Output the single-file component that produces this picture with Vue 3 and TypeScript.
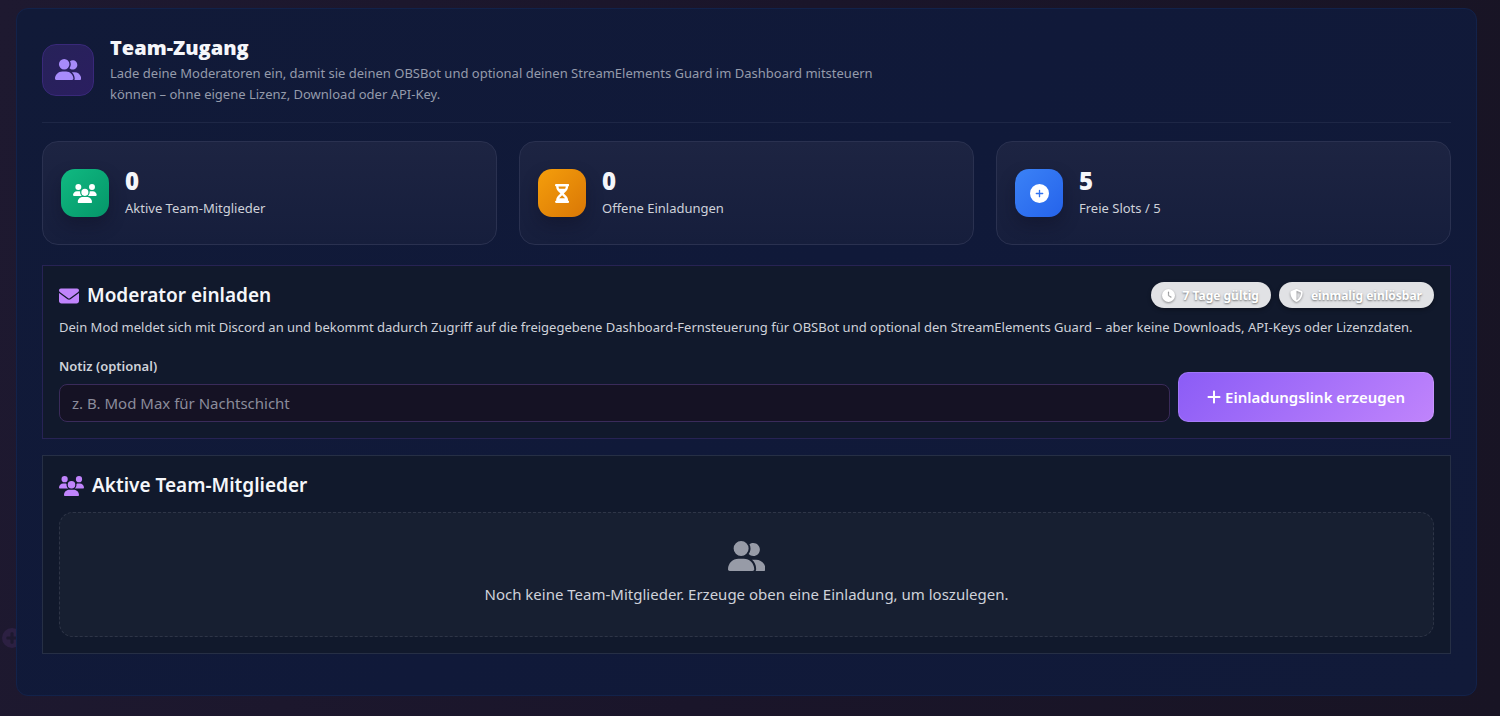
<script setup lang="ts">
interface Glyph {
  box: string
  path: string
}

interface Stat {
  value: number
  label: string
  tone: string
  glyph: Glyph
}

const userGroup: Glyph = {
  box: '0 0 640 512',
  path: 'M96 128a128 128 0 1 1 256 0A128 128 0 1 1 96 128zM0 482.3C0 383.8 79.8 304 178.3 304h91.4C368.2 304 448 383.8 448 482.3c0 16.4-13.3 29.7-29.7 29.7H29.7C13.3 512 0 498.7 0 482.3zM609.3 512H471.4c5.4-9.4 8.6-20.3 8.6-32v-8c0-60.7-27.1-115.2-69.8-151.8c2.4-.1 4.7-.2 7.1-.2h61.4C567.8 320 640 392.2 640 481.3c0 17-13.8 30.7-30.7 30.7zM432 256c-31 0-59-12.6-79.3-32.9C372.4 196.5 384 163.6 384 128c0-26.8-6.6-52.1-18.3-74.3C384.3 40.1 407.2 32 432 32c61.9 0 112 50.1 112 112s-50.1 112-112 112z',
}

const users: Glyph = {
  box: '0 0 640 512',
  path: 'M144 0a80 80 0 1 1 0 160A80 80 0 1 1 144 0zM512 0a80 80 0 1 1 0 160A80 80 0 1 1 512 0zM0 298.7C0 239.8 47.8 192 106.7 192h42.7c15.9 0 31 3.5 44.6 9.7c-1.3 7.2-1.9 14.7-1.9 22.3c0 38.2 16.8 72.5 43.3 96c-.2 0-.4 0-.7 0H21.3C9.6 320 0 310.4 0 298.7zM405.3 320c-.2 0-.4 0-.7 0c26.6-23.5 43.3-57.8 43.3-96c0-7.6-.7-15-1.9-22.3c13.6-6.3 28.7-9.7 44.6-9.7h42.7C592.2 192 640 239.8 640 298.7c0 11.8-9.6 21.3-21.3 21.3H405.3zM224 224a96 96 0 1 1 192 0 96 96 0 1 1 -192 0zM128 485.3C128 411.7 187.7 352 261.3 352H378.7C452.3 352 512 411.7 512 485.3c0 14.7-11.9 26.7-26.7 26.7H154.7c-14.7 0-26.7-11.9-26.7-26.7z',
}

const hourglass: Glyph = {
  box: '0 0 384 512',
  path: 'M32 0C14.3 0 0 14.3 0 32S14.3 64 32 64V75c0 42.4 16.9 83.1 46.9 113.1L146.7 256 78.9 323.9C48.9 353.9 32 394.6 32 437v11c-17.7 0-32 14.3-32 32s14.3 32 32 32H64 320h32c17.7 0 32-14.3 32-32s-14.3-32-32-32V437c0-42.4-16.9-83.1-46.9-113.1L237.3 256l67.9-67.9c30-30 46.9-70.7 46.9-113.1V64c17.7 0 32-14.3 32-32s-14.3-32-32-32H320 64 32zM96 75V64H288V75c0 19-5.6 37.4-16 53H112c-10.3-15.6-16-34-16-53zm16 309c3.5-5.3 7.6-10.3 12.1-14.9L192 301.3l67.9 67.9c4.6 4.6 8.6 9.6 12.1 14.9H112z',
}

const circlePlus: Glyph = {
  box: '0 0 512 512',
  path: 'M256 512A256 256 0 1 0 256 0a256 256 0 1 0 0 512zM238 342V274H170c-10 0-18-8-18-18s8-18 18-18h68V170c0-10 8-18 18-18s18 8 18 18v68h68c10 0 18 8 18 18s-8 18-18 18H274v68c0 10-8 18-18 18s-18-8-18-18z',
}

const floaterPlus: Glyph = {
  box: '0 0 512 512',
  path: 'M256 512A256 256 0 1 0 256 0a256 256 0 1 0 0 512zM216 370V296H142c-20 0-32-18-32-40s12-40 32-40h74V142c0-20 18-32 40-32s40 12 40 32v74h74c20 0 32 18 32 40s-12 40-32 40H296v74c0 20-18 32-40 32s-40-12-40-32z',
}

const envelope: Glyph = {
  box: '0 0 512 512',
  path: 'M48 64C21.5 64 0 85.5 0 112c0 15.1 7.1 29.3 19.2 38.4L236.8 313.6c11.4 8.5 27 8.5 38.4 0L492.8 150.4c12.1-9.1 19.2-23.3 19.2-38.4c0-26.5-21.5-48-48-48H48zM0 176V384c0 35.3 28.7 64 64 64H448c35.3 0 64-28.7 64-64V176L294.4 339.2c-22.8 17.1-54 17.1-76.8 0L0 176z',
}

const clock: Glyph = {
  box: '0 0 512 512',
  path: 'M256 0a256 256 0 1 1 0 512A256 256 0 1 1 256 0zM232 120V256c0 8 4 15.5 10.7 20l96 64c11 7.4 25.9 4.4 33.3-6.7s4.4-25.9-6.7-33.3L280 243.2V120c0-13.3-10.7-24-24-24s-24 10.7-24 24z',
}

const shield: Glyph = {
  box: '0 0 512 512',
  path: 'M256 0c4.6 0 9.2 1 13.4 2.9L457.7 82.8c22 9.3 38.4 31 38.3 57.2c-.5 99.2-41.3 280.7-213.6 363.2c-16.7 8-36.1 8-52.8 0C57.3 420.7 16.5 239.2 16 140c-.1-26.2 16.3-47.9 38.3-57.2L242.7 2.9C246.8 1 251.4 0 256 0zm0 66.8V444.8C394 378 431.1 230.1 432 141.4L256 66.8l0 0z',
}

const plus: Glyph = {
  box: '0 0 448 512',
  path: 'M256 80c0-17.7-14.3-32-32-32s-32 14.3-32 32V224H48c-17.7 0-32 14.3-32 32s14.3 32 32 32H192V432c0 17.7 14.3 32 32 32s32-14.3 32-32V288H400c17.7 0 32-14.3 32-32s-14.3-32-32-32H256V80z',
}

const stats: Stat[] = [
  { value: 0, label: 'Aktive Team-Mitglieder', tone: 'green', glyph: users },
  { value: 0, label: 'Offene Einladungen', tone: 'amber', glyph: hourglass },
  { value: 5, label: 'Freie Slots / 5', tone: 'blue', glyph: circlePlus },
]

const badges = [
  { label: '7 Tage gültig', glyph: clock },
  { label: 'einmalig einlösbar', glyph: shield },
]
</script>

<template>
  <div class="page">
    <svg class="floater" :viewBox="floaterPlus.box" aria-hidden="true"><path :d="floaterPlus.path" /></svg>

    <main class="shell">
      <header class="head">
        <span class="head-icon">
          <svg class="glyph" :viewBox="userGroup.box" aria-hidden="true"><path :d="userGroup.path" /></svg>
        </span>
        <div class="head-text">
          <h1>Team-Zugang</h1>
          <p>
            Lade deine Moderatoren ein, damit sie deinen OBSBot und optional deinen StreamElements Guard im Dashboard
            mitsteuern können – ohne eigene Lizenz, Download oder API-Key.
          </p>
        </div>
      </header>

      <section class="stats">
        <article v-for="stat in stats" :key="stat.label" class="stat">
          <span class="stat-icon" :class="stat.tone">
            <svg class="glyph" :viewBox="stat.glyph.box" aria-hidden="true"><path :d="stat.glyph.path" /></svg>
          </span>
          <div>
            <strong class="stat-value">{{ stat.value }}</strong>
            <span class="stat-label">{{ stat.label }}</span>
          </div>
        </article>
      </section>

      <section class="panel invite">
        <div class="panel-head">
          <h2>
            <svg class="glyph" :viewBox="envelope.box" aria-hidden="true"><path :d="envelope.path" /></svg>
            Moderator einladen
          </h2>
          <div class="badges">
            <span v-for="badge in badges" :key="badge.label" class="badge">
              <svg class="glyph" :viewBox="badge.glyph.box" aria-hidden="true"><path :d="badge.glyph.path" /></svg>
              {{ badge.label }}
            </span>
          </div>
        </div>
        <p class="info">
          Dein Mod meldet sich mit Discord an und bekommt dadurch Zugriff auf die freigegebene Dashboard-Fernsteuerung
          für OBSBot und optional den StreamElements Guard – aber keine Downloads, API-Keys oder Lizenzdaten.
        </p>
        <form class="invite-form" @submit.prevent>
          <div class="field">
            <label for="note">Notiz (optional)</label>
            <input id="note" type="text" placeholder="z. B. Mod Max für Nachtschicht" />
          </div>
          <button type="submit">
            <svg class="glyph" :viewBox="plus.box" aria-hidden="true"><path :d="plus.path" /></svg>
            Einladungslink erzeugen
          </button>
        </form>
      </section>

      <section class="panel members">
        <h2>
          <svg class="glyph" :viewBox="users.box" aria-hidden="true"><path :d="users.path" /></svg>
          Aktive Team-Mitglieder
        </h2>
        <div class="empty">
          <svg class="glyph" :viewBox="userGroup.box" aria-hidden="true"><path :d="userGroup.path" /></svg>
          <p>Noch keine Team-Mitglieder. Erzeuge oben eine Einladung, um loszulegen.</p>
        </div>
      </section>
    </main>
  </div>
</template>

<style>
body {
  margin: 0;
  background: #191427;
}
</style>

<style scoped>
* {
  box-sizing: border-box;
}

.page {
  position: relative;
  min-height: 100vh;
  padding: 8px 23px 20px 16px;
  background: linear-gradient(100deg, #1e1930 0%, #1a152a 50%, #181424 100%);
  color: #f5f6fa;
  font-family: 'Segoe UI', 'Noto Sans', 'Open Sans', sans-serif;
  font-size: 13px;
}

h1,
h2,
p {
  margin: 0;
}

.glyph {
  display: block;
  flex: none;
  height: 20px;
  fill: currentColor;
}

.floater {
  position: absolute;
  left: 2px;
  top: 628px;
  width: 20px;
  height: 20px;
  fill: #2c2042;
}

.shell {
  position: relative;
  padding: 25px 25px 41px;
  border: 1px solid #12224a;
  border-radius: 12px;
  background: linear-gradient(135deg, #111a38 0%, #101939 50%, #111a39 100%);
}

.head {
  display: flex;
  align-items: center;
  gap: 16px;
  padding-bottom: 17px;
  border-bottom: 1px solid #1e2746;
}

.head-icon {
  display: grid;
  flex: none;
  place-items: center;
  width: 52px;
  height: 52px;
  border: 1px solid #39297a;
  border-radius: 14px;
  background: linear-gradient(135deg, #272259, #2a1e60);
  color: #a78bfa;
}

.head-icon .glyph {
  height: 21px;
}

.head-text {
  max-width: 800px;
}

h1 {
  margin-bottom: 2px;
  font-family: 'Segoe UI', 'Open Sans', sans-serif;
  font-size: 20px;
  font-weight: 800;
  line-height: 27px;
}

.head-text p {
  color: #959bab;
  line-height: 21px;
}

.stats {
  display: grid;
  grid-template-columns: repeat(3, 1fr);
  gap: 22px;
  margin: 18px 0 20px;
}

.stat {
  display: flex;
  align-items: center;
  gap: 16px;
  min-height: 104px;
  padding: 17px 18px;
  border: 1px solid #2a3150;
  border-radius: 16px;
  background: linear-gradient(180deg, #1d2442, #161e3c);
}

.stat-icon {
  display: grid;
  flex: none;
  place-items: center;
  width: 48px;
  height: 48px;
  border-radius: 14px;
  box-shadow: 0 8px 16px rgba(15, 15, 35, 0.4);
  color: #fff;
}

.stat-icon .glyph {
  height: 19px;
}

.green {
  background: linear-gradient(135deg, #10b981, #059669);
}

.amber {
  background: linear-gradient(135deg, #f59e0b, #d97706);
}

.blue {
  background: linear-gradient(135deg, #3b82f6, #2563eb);
}

.stat-value,
.stat-label {
  display: block;
}

.stat-value {
  font-family: 'Segoe UI', 'Open Sans', sans-serif;
  font-size: 24px;
  font-weight: 800;
  line-height: 26px;
}

.stat-label {
  margin-top: 4px;
  color: #cfd2da;
  line-height: 20px;
}

.panel {
  padding: 16px;
  border: 1px solid #262f45;
  background: #11192c;
}

.invite {
  margin-bottom: 16px;
  border-color: #272354;
}

.panel-head {
  display: flex;
  justify-content: space-between;
  align-items: flex-start;
}

h2 {
  display: flex;
  align-items: center;
  gap: 8px;
  font-size: 19px;
  font-weight: 600;
  line-height: 27px;
}

h2 .glyph {
  color: #c084fc;
}

.badges {
  display: flex;
  gap: 8px;
}

.badge {
  display: flex;
  align-items: center;
  gap: 8px;
  height: 26px;
  padding: 0 12px 0 11px;
  border-radius: 13px;
  background: #e1e2e5;
  box-shadow: 0 2px 4px rgba(0, 0, 0, 0.3);
  color: #fff;
  font-size: 12px;
  font-weight: 700;
  text-shadow: 0 1px 2px rgba(0, 0, 0, 0.5);
}

.badge .glyph {
  height: 13px;
  overflow: visible;
  filter: drop-shadow(0 1px 1px rgba(0, 0, 0, 0.4));
}

.info {
  margin-top: 7px;
  color: #cfd2da;
  line-height: 22px;
}

.invite-form {
  display: flex;
  align-items: flex-end;
  gap: 8px;
  margin-top: 18px;
}

.field {
  display: flex;
  flex: 1;
  flex-direction: column;
  gap: 8px;
}

label {
  color: #cfd2da;
  font-weight: 600;
  line-height: 20px;
}

input {
  width: 100%;
  height: 38px;
  padding: 0 12px;
  border: 1px solid #3a2b5a;
  border-radius: 8px;
  outline: none;
  background: #151224;
  color: #f5f6fa;
  font: inherit;
  font-size: 15px;
}

input::placeholder {
  color: #8b8c9b;
  opacity: 1;
}

button {
  display: flex;
  align-items: center;
  justify-content: center;
  gap: 4px;
  height: 50px;
  padding: 0 28px;
  border: 1px solid rgba(255, 255, 255, 0.15);
  border-radius: 10px;
  background: linear-gradient(135deg, #8b5cf6, #c084fc) border-box;
  color: #fff;
  font: inherit;
  font-size: 15px;
  font-weight: 600;
  cursor: pointer;
}

button .glyph {
  height: 16px;
}

.empty {
  display: flex;
  flex-direction: column;
  align-items: center;
  gap: 11px;
  margin-top: 13px;
  padding: 28px 24px 30px;
  border: 1px dashed #2e3547;
  border-radius: 14px;
  background: #171f31;
  color: #cfd2da;
  font-size: 15px;
  line-height: 24px;
}

.empty .glyph {
  height: 30px;
  color: #979ba7;
}
</style>
